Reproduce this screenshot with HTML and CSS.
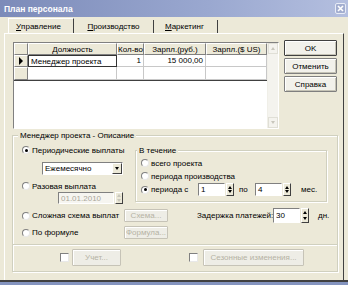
FILE: index.html
```html
<!DOCTYPE html>
<html lang="ru">
<head>
<meta charset="utf-8">
<title>План персонала</title>
<link rel="stylesheet" href="styles.css">
</head>
<body>
<div class="window">
  <div class="titlebar">
    <span class="title">План персонала</span>
    <span class="close"><svg width="9" height="9" viewBox="0 0 9 9"><path d="M2 2L7 7M7 2L2 7" stroke="#fff" stroke-width="1.6"/></svg></span>
  </div>
  <div class="tabs">
    <div class="tab active"><u>У</u>правление</div>
    <div class="tab"><u>П</u>роизводство</div>
    <div class="tab"><u>М</u>аркетинг</div>
  </div>
  <div class="panel">
    <div class="top">
      <div class="grid">
        <div class="grid-main">
          <div class="grow head">
            <div class="c ind"></div>
            <div class="c w1">Должность</div>
            <div class="c w2">Кол-во</div>
            <div class="c w3">Зарпл.(руб.)</div>
            <div class="c w4">Зарпл.($ US)</div>
          </div>
          <div class="grow r1">
            <div class="c ind"><span class="arrow"></span></div>
            <div class="c w1 sel">Менеджер проекта</div>
            <div class="c w2 num">1</div>
            <div class="c w3 num">15 000,00</div>
            <div class="c w4"></div>
          </div>
          <div class="grow r2">
            <div class="c ind"></div>
            <div class="c w1"></div>
            <div class="c w2"></div>
            <div class="c w3"></div>
            <div class="c w4"></div>
          </div>
        </div>
        <div class="vscroll">
          <div class="sbtn"><span class="tri up"></span></div>
          <div class="strack"></div>
          <div class="sbtn"><span class="tri down"></span></div>
        </div>
      </div>
      <div class="buttons">
        <div class="btn def">OK</div>
        <div class="btn">Отменить</div>
        <div class="btn">Справка</div>
      </div>
    </div>

    <div class="group">
      <div class="glabel">Менеджер проекта - Описание</div>
      <div class="gtop">
        <div class="lcol">
          <div class="row r-per"><span class="radio on"></span><span class="lbl">Периодические выплаты</span></div>
          <div class="combo"><span class="ctext">Ежемесячно</span><span class="cbtn"><span class="tri down dark"></span></span></div>
          <div class="row r-raz"><span class="radio"></span><span class="lbl">Разовая выплата</span></div>
          <div class="spinfield date"><span class="field dis">01.01.2010</span><span class="spin"><span class="tri up"></span><span class="tri down"></span></span></div>
        </div>
        <div class="during">
          <div class="glabel small">В течение</div>
          <div class="drow"><span class="radio"></span><span class="lbl">всего проекта</span></div>
          <div class="drow"><span class="radio"></span><span class="lbl">периода производства</span></div>
          <div class="drow last">
            <span class="radio on"></span><span class="lbl fixed">периода с</span>
            <span class="spinfield"><span class="field">1</span><span class="spin"><span class="tri up dark"></span><span class="tri down dark"></span></span></span>
            <span class="po">по</span>
            <span class="spinfield"><span class="field">4</span><span class="spin"><span class="tri up dark"></span><span class="tri down dark"></span></span></span>
            <span class="mes">мес.</span>
          </div>
        </div>
      </div>
      <div class="brow rc">
        <span class="radio"></span><span class="lbl wide">Сложная схема выплат</span>
        <span class="btn small dis">Схема...</span>
        <span class="delay">Задержка платежей:</span>
        <span class="spinfield d2"><span class="field">30</span><span class="spin"><span class="tri up dark"></span><span class="tri down dark"></span></span></span>
        <span class="dn">дн.</span>
      </div>
      <div class="brow rd">
        <span class="radio"></span><span class="lbl wide">По формуле</span>
        <span class="btn small dis">Формула...</span>
      </div>
      <div class="sep"></div>
      <div class="chkrow">
        <span class="check c1"></span><span class="btn cb1 dis">Учет...</span>
        <span class="check c2"></span><span class="btn cb2 dis">Сезонные изменения...</span>
      </div>
    </div>
  </div>
  <div class="frame-bottom"></div>
</div>
</body>
</html>
```

FILE: styles.css
```css
* { box-sizing: border-box; }
html, body { margin: 0; padding: 0; }
body {
  width: 348px; height: 285px; overflow: hidden;
  background: #ece9d8;
  font-family: "Liberation Sans", Arial, sans-serif;
  font-size: 8px;
  color: #000;
}
.window { width: 348px; height: 285px; display: flex; flex-direction: column; }
.titlebar {
  height: 17px; flex: none;
  background: linear-gradient(to right, #7c8bb9, #9aa8d0 60%, #b4bfdf);
  display: flex; align-items: center; padding: 0 2px 0 4px;
}
.title { color: #fff; font-weight: bold; font-size: 8.5px; }
.close {
  margin-left: auto; width: 11px; height: 11px;
  border: 1px solid #e8ecf6; border-radius: 2px;
  background: #a3aed0;
  display: flex; align-items: center; justify-content: center;
}
.tabs { height: 16px; flex: none; display: flex; align-items: flex-end; padding-left: 8px; }
.tab {
  height: 13px; display: flex; align-items: center; justify-content: center;
  border-right: 1px solid #404040;
  padding: 0 4px;
}
.tab:nth-child(1) { width: 66px; justify-content: flex-start; padding-left: 7px; height: 15px; border-top: 1px solid #fff; border-left: 1px solid #fff; }
.tab:nth-child(2) { width: 80px; }
.tab:nth-child(3) { width: 64px; justify-content: flex-start; padding-left: 11px; }
.tab u { text-decoration: underline; }

.panel {
  margin-left: 4px; width: 340px; height: 247px; flex: none;
  border-top: 1px solid #fff; border-left: 1px solid #fff;
  border-right: 1px solid #404040;
  padding-left: 8px;
}
.top { display: flex; align-items: flex-start; margin-top: 6px; }
.grid {
  margin-top: 2px; width: 266px; height: 87px;
  border: 1px solid; border-color: #808080 #fff #fff #808080;
  background: #fff; display: flex;
}
.grid-main { width: 253px; background: #fff; }
.grow { display: flex; }
.grow.head { height: 12px; }
.grow.r1 { height: 12px; }
.grow.r2 { height: 14px; border-bottom: 1px solid #404040; }
.c { height: 100%; border-right: 1px solid #c8c8c8; border-bottom: 1px solid #c8c8c8; display: flex; align-items: center; padding: 0 2px; white-space: nowrap; }
.ind { width: 14px; background: #ece9d8; border-top: 1px solid #fff; border-left: 1px solid #fff; border-right: 1px solid #808080; border-bottom: 1px solid #808080; }
.w1 { width: 89px; }
.w2 { width: 27px; }
.w3 { width: 62px; }
.w4 { width: 61px; }
.head .c { background: #ece9d8; border-top: 1px solid #fff; border-left: 1px solid #fff; border-right: 1px solid #808080; border-bottom: 1px solid #808080; justify-content: center; }
.num { justify-content: flex-end; }
.sel { border: 1px solid #333; }
.arrow { width: 0; height: 0; border-left: 4px solid #000; border-top: 4px solid transparent; border-bottom: 4px solid transparent; margin-left: 2px; }
.vscroll { width: 11px; display: flex; flex-direction: column; background: #f4f3ee; border-left: 1px solid #f0efe8; }
.sbtn { height: 11px; background: #f4f3ee; border: 1px solid #e0dfd6; display: flex; align-items: center; justify-content: center; }
.strack { flex: 1; }
.tri { display: block; width: 0; height: 0; border-left: 2.5px solid transparent; border-right: 2.5px solid transparent; }
.tri.up { border-bottom: 3px solid #c8c6bc; }
.tri.down { border-top: 3px solid #c8c6bc; }
.tri.up.dark { border-bottom-color: #000; }
.tri.down.dark { border-top-color: #000; }

.buttons { margin-left: 5px; display: flex; flex-direction: column; gap: 2px; }
.btn {
  display: flex; align-items: center; justify-content: center;
  width: 53px; height: 16px;
  background: #f2f1eb;
  border: 1px solid #7f7f7f; border-radius: 1px;
  box-shadow: inset 1px 1px #fff, inset -1px -1px #c5c3b6;
  white-space: nowrap;
}
.btn.def { border-color: #404040; }
.btn.dis { color: #b5b2a4; border-color: #c6c3b7; box-shadow: inset 1px 1px #fff; background: #eeede6; }

.group {
  margin: 6px 0 0 -1px; width: 326px; height: 137px;
  border: 1px solid #d0d0bf;
  box-shadow: inset 1px 1px #fff, 1px 1px #fff;
}
.glabel {
  width: fit-content; margin: -6px 0 0 5px; padding: 0 2px;
  background: #ece9d8; line-height: 11px; height: 11px;
}
.glabel.small { margin-left: 1px; }
.gtop { display: flex; }
.lcol { width: 122px; }
.row { display: flex; align-items: center; height: 12px; padding-left: 9px; }
.r-per { margin-top: 3px; }
.r-raz { margin-top: 5px; }
.radio {
  width: 8px; height: 8px; border-radius: 50%; flex: none;
  background: #fff; border: 1px solid; border-color: #808080 #e8e8e8 #e8e8e8 #808080;
  display: inline-flex; align-items: center; justify-content: center;
}
.radio.on::after { content: ""; width: 3px; height: 3px; border-radius: 50%; background: #000; }
.lbl { margin-left: 2px; white-space: nowrap; }
.combo {
  margin: 6px 0 0 29px; width: 81px; height: 13px;
  background: #fff; border: 1px solid; border-color: #808080 #fff #fff #808080;
  display: flex; align-items: center;
}
.ctext { padding-left: 2px; flex: 1; }
.cbtn {
  width: 10px; height: 11px; background: #ece9d8;
  border: 1px solid; border-color: #fff #404040 #404040 #fff;
  display: flex; align-items: center; justify-content: center;
}
.spinfield { display: inline-flex; align-items: stretch; height: 13px; }
.spinfield.date { display: flex; margin-left: 45px; height: 12px; }
.field {
  width: 27px; background: #fff; border: 1px solid; border-color: #808080 #fff #fff #808080;
  padding-left: 2px; display: flex; align-items: center;
}
.date .field { width: 56px; background: #f6f5f0; }
.field.dis { color: #aaa79a; }
.spin {
  width: 8px; margin-left: 1px; background: #ece9d8;
  border: 1px solid; border-color: #fff #404040 #404040 #fff;
  display: flex; flex-direction: column; align-items: center; justify-content: space-evenly;
}
.during {
  margin-top: 9px; width: 192px; height: 52px;
  border: 1px solid #d0d0bf; box-shadow: inset 1px 1px #fff, 1px 1px #fff;
}
.drow { display: flex; align-items: center; height: 12px; padding-left: 5px; margin-top: 1px; }
.drow.last { height: 13px; }
.lbl.fixed { width: 47px; }
.po { width: 21px; padding-left: 5px; }
.mes { margin-left: 10px; }

.brow { display: flex; align-items: center; height: 13px; padding-left: 9px; }
.rc { margin-top: 5px; }
.rd { margin-top: 4px; }
.lbl.wide { width: 92px; }
.btn.small { width: 44px; height: 13px; }
.delay { margin-left: 29px; width: 76px; white-space: nowrap; }
.d2 { height: 15px; }
.dn { margin-left: 9px; }
.sep { margin-top: 5px; height: 2px; border-top: 1px solid #d0d0bf; border-bottom: 1px solid #fff; }
.chkrow { margin-top: 3px; display: flex; align-items: center; height: 17px; }
.check {
  width: 9px; height: 9px; background: #fff;
  border: 1px solid; border-color: #808080 #e8e8e8 #e8e8e8 #808080;
}
.c1 { margin-left: 47px; }
.btn.cb1 { margin-left: 3px; width: 49px; height: 17px; }
.c2 { margin-left: 68px; }
.btn.cb2 { margin-left: 5px; width: 101px; height: 17px; }

.frame-bottom { height: 5px; flex: none; border-top: 2px solid #404040; background: #8494bf; }
```
